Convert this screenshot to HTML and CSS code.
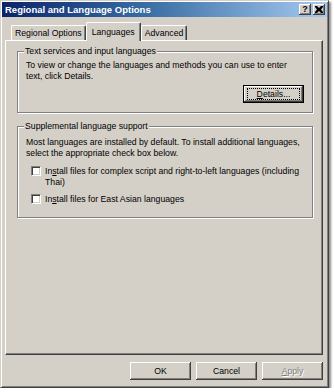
FILE: index.html
```html
<!DOCTYPE html>
<html lang="en">
<head>
    <meta charset="UTF-8">
    <title>Regional and Language Options</title>
    <link rel="stylesheet" href="styles.css">
</head>
<body>
    <div class="window">
        <div class="titlebar">
            <span class="title">Regional and Language Options</span>
            <div class="caption-btns">
                <span class="cbtn help">?</span>
                <span class="cbtn close">
                    <svg width="8" height="7" viewBox="0 0 8 7">
                        <path d="M0 0h2l2 2 2-2h2v1L6 3.5 8 6v1H6L4 5 2 7H0V6l2-2.5L0 1z" fill="#000"/>
                    </svg>
                </span>
            </div>
        </div>

        <div class="content">
            <div class="tabs">
                <div class="tab">Regional Options</div>
                <div class="tab active">Languages</div>
                <div class="tab">Advanced</div>
            </div>

            <div class="panel">
                <fieldset class="group group-text">
                    <legend>Text services and input languages</legend>
                    <p>To view or change the languages and methods you can use to enter<br>text, click Details.</p>
                    <div class="group-actions">
                        <button class="btn default"><span class="focus"><u>D</u>etails...</span></button>
                    </div>
                </fieldset>

                <fieldset class="group group-supp">
                    <legend>Supplemental language support</legend>
                    <p>Most languages are installed by default. To install additional languages,<br>select the appropriate check box below.</p>
                    <label class="check first">
                        <span class="box"></span>
                        <span>In<u>s</u>tall files for complex script and right-to-left languages (including<br>Thai)</span>
                    </label>
                    <label class="check">
                        <span class="box"></span>
                        <span>In<u>s</u>tall files for East Asian languages</span>
                    </label>
                </fieldset>
            </div>

            <div class="actions">
                <button class="btn">OK</button>
                <button class="btn">Cancel</button>
                <button class="btn disabled"><u>A</u>pply</button>
            </div>
        </div>
    </div>
</body>
</html>
```

FILE: styles.css
```css
body {
    margin: 0;
    background-color: #ffffff;
    font-family: "Liberation Sans", Arial, sans-serif;
    font-size: 8.7px;
    color: #000;
}
.window {
    width: 329px;
    height: 388px;
    box-sizing: border-box;
    background-color: #d4d0c8;
    border: 1px solid;
    border-color: #d4d0c8 #404040 #404040 #d4d0c8;
    box-shadow: inset 1px 1px #fff, inset -1px -1px #808080, 2px 2px 2px rgba(0, 0, 0, 0.45);
    padding: 1px;
    display: flex;
    flex-direction: column;
}
.titlebar {
    height: 15px;
    background: linear-gradient(to right, #0a246a, #3a6ea5 45%, #a6caf0);
    display: flex;
    align-items: center;
    justify-content: space-between;
    padding: 0 2px 0 3px;
}
.title {
    color: #fff;
    font-weight: bold;
    font-size: 9.5px;
}
.caption-btns {
    display: flex;
    gap: 2px;
}
.cbtn {
    width: 12px;
    height: 11px;
    box-sizing: border-box;
    background-color: #d4d0c8;
    box-shadow: inset -1px -1px #404040, inset 1px 1px #fff, inset -2px -2px #808080;
    display: flex;
    align-items: center;
    justify-content: center;
    font-weight: bold;
    font-size: 9px;
    line-height: 1;
}
.content {
    flex: 1;
    display: flex;
    flex-direction: column;
    padding: 5px 0 0 3px;
}
.tabs {
    display: flex;
    align-items: flex-end;
    padding-left: 6px;
    height: 18px;
}
.tab {
    height: 15px;
    box-sizing: border-box;
    padding: 2px 3px 0 3px;
    border-left: 1px solid #fff;
    border-top: 1px solid #fff;
    border-right: 1px solid #404040;
    border-radius: 2px 2px 0 0;
    box-shadow: inset -1px 0 #808080;
    line-height: 11px;
}
.tab.active {
    height: 19px;
    margin-bottom: -1px;
    padding: 4px 5px 0 5px;
    background-color: #d4d0c8;
    position: relative;
    z-index: 1;
}
.panel {
    width: 318px;
    height: 315px;
    box-sizing: border-box;
    border: 1px solid;
    border-color: #fff #404040 #404040 #fff;
    box-shadow: inset -1px -1px #808080;
    padding: 5px 9px 0 11px;
}
.group {
    margin: 0;
    min-width: 0;
    border: 1px solid #808080;
    box-shadow: 1px 1px #fff, inset 1px 1px #fff;
    padding: 3px 8px 9px 8px;
}
.group legend {
    padding: 0 1px;
    margin-left: -2px;
    line-height: 11px;
    background-color: #d4d0c8;
}
.group p {
    margin: 0;
    line-height: 11px;
    white-space: nowrap;
}
.group-supp {
    margin-top: 8px;
    padding-top: 5px;
    padding-bottom: 12px;
}
.group-actions {
    display: flex;
    justify-content: flex-end;
    margin-top: 3px;
}
.check {
    display: flex;
    align-items: flex-start;
    gap: 4px;
    padding-left: 5px;
    line-height: 11px;
    margin-top: 6px;
    white-space: nowrap;
}
.check.first {
    margin-top: 7px;
}
.box {
    width: 10px;
    height: 10px;
    flex: none;
    box-sizing: border-box;
    background-color: #fff;
    border: 1px solid;
    border-color: #808080 #fff #fff #808080;
    box-shadow: inset 1px 1px #404040, inset -1px -1px #d4d0c8;
}
.btn {
    width: 61px;
    height: 18px;
    padding: 0;
    border: none;
    background-color: #d4d0c8;
    box-shadow: inset -1px -1px #404040, inset 1px 1px #fff, inset -2px -2px #808080;
    font-family: inherit;
    font-size: 8.7px;
    color: #000;
}
.btn.default {
    border: 1px solid #000;
    box-shadow: inset -1px -1px #404040, inset 1px 1px #fff, inset -2px -2px #808080;
}
.btn .focus {
    display: block;
    margin: 0 3px;
    border: 1px dotted #000;
    line-height: 10px;
}
.btn.disabled {
    color: #808080;
    text-shadow: 1px 1px #fff;
}
.actions {
    display: flex;
    justify-content: flex-end;
    gap: 5px;
    padding-right: 4px;
    margin-top: 7px;
}
```
